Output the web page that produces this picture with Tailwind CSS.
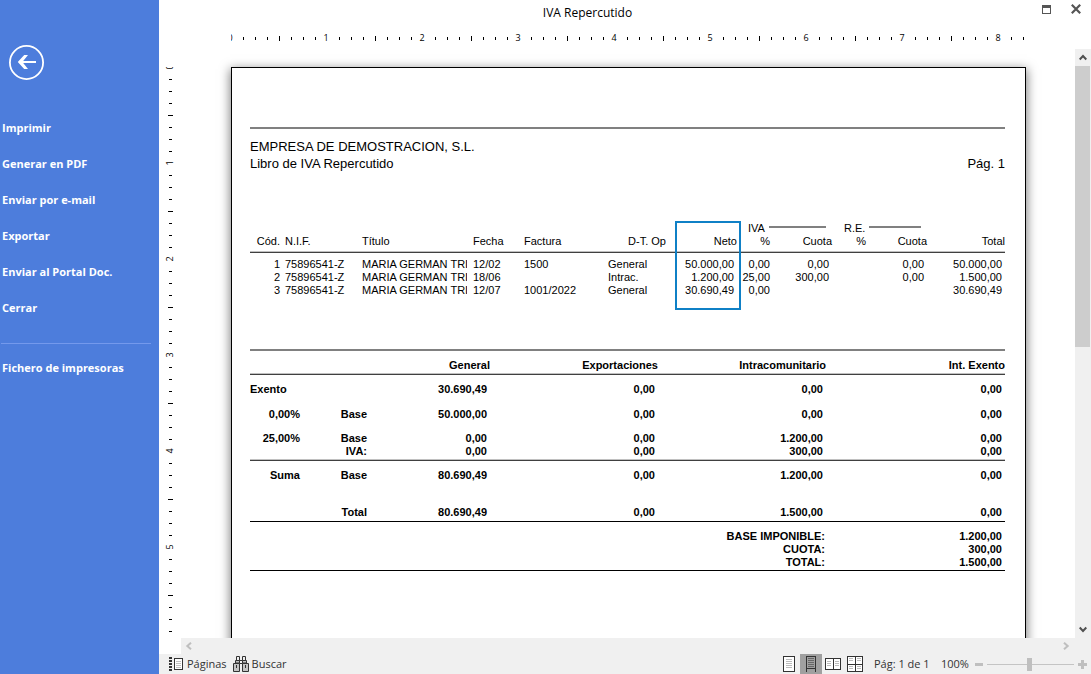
<!DOCTYPE html>
<html lang="es">
<head>
<meta charset="utf-8">
<title>IVA Repercutido</title>
<script src="https://cdn.jsdelivr.net/npm/@tailwindcss/browser@4"></script>
</head>
<body class="flex h-screen overflow-hidden bg-white font-['Open_Sans','Noto_Sans',sans-serif] text-xs text-black">

<aside class="flex w-[159px] shrink-0 flex-col bg-[#4d7ddc] text-white">
  <button type="button" aria-label="Volver" class="mt-[45px] ml-[9px] size-[35px]">
    <svg viewBox="0 0 35 35" class="size-full" fill="none" stroke="#fff">
      <circle cx="17.5" cy="17.5" r="16.6" stroke-width="1.8"/>
      <path d="M11 17H27" stroke-width="2"/>
      <path d="M8.800 17L15.200 10H19L13.400 17L19 24H15.200Z" fill="#fff" stroke="none"/>
    </svg>
  </button>
  <nav class="mt-[30px] flex flex-col text-[11px] font-bold">
    <a href="#" class="flex h-9 items-center pl-0.5">Imprimir</a>
    <a href="#" class="flex h-9 items-center pl-0.5">Generar en PDF</a>
    <a href="#" class="flex h-9 items-center pl-0.5">Enviar por e-mail</a>
    <a href="#" class="flex h-9 items-center pl-0.5">Exportar</a>
    <a href="#" class="flex h-9 items-center pl-0.5">Enviar al Portal Doc.</a>
    <a href="#" class="flex h-9 items-center pl-0.5">Cerrar</a>
    <hr class="mt-[17px] mr-2 mb-1.5 ml-px border-[#7499ec]">
    <a href="#" class="flex h-9 items-center pl-0.5">Fichero de impresoras</a>
  </nav>
</aside>

<main class="flex min-w-0 flex-1 flex-col">
  <header class="flex h-7 shrink-0">
    <h1 class="flex flex-1 items-center justify-center pb-0.5">IVA Repercutido</h1>
    <div class="flex w-[75px] items-start">
      <button type="button" aria-label="Maximizar" class="ml-[26px] pt-[5px]">
        <svg width="9" height="9" class="block" shape-rendering="crispEdges"><path d="M0 0H9V9H0ZM1 3V8H8V3Z" fill="#555" fill-rule="evenodd"/></svg>
      </button>
      <button type="button" aria-label="Cerrar ventana" class="ml-5 pt-1">
        <svg width="10" height="10" class="block" fill="none" stroke="#555" stroke-width="2.2"><path d="M.8.8L9.2 9.2M9.2.8L.8 9.2"/></svg>
      </button>
    </div>
  </header>

  <svg class="h-[21px] w-full shrink-0" font-size="9" text-anchor="middle" aria-label="Regla horizontal">
    <defs>
      <pattern id="ticks-x" x="72" y="0" width="96" height="21" patternUnits="userSpaceOnUse">
        <path d="M12 9h1v3h-1zM24 9h1v3h-1zM36 9h1v3h-1zM48 8h1v5h-1zM60 9h1v3h-1zM72 9h1v3h-1zM84 9h1v3h-1z" shape-rendering="crispEdges"/>
      </pattern>
      <clipPath id="zero-x"><rect x="72" y="0" width="10" height="21"/></clipPath>
    </defs>
    <rect x="72" width="795" height="21" fill="url(#ticks-x)"/>
    <text x="71" y="13" clip-path="url(#zero-x)">0</text>
    <text x="167" y="13">1</text><text x="263" y="13">2</text><text x="359" y="13">3</text><text x="455" y="13">4</text>
    <text x="551" y="13">5</text><text x="647" y="13">6</text><text x="743" y="13">7</text><text x="839" y="13">8</text>
  </svg>

  <div class="flex min-h-0 flex-1">
    <svg class="h-full w-[22px] shrink-0" font-size="9" text-anchor="middle" aria-label="Regla vertical">
      <defs>
        <pattern id="ticks-y" x="0" y="18" width="22" height="96" patternUnits="userSpaceOnUse">
          <path d="M10 12h3v1h-3zM10 24h3v1h-3zM10 36h3v1h-3zM9 48h5v1h-5zM10 60h3v1h-3zM10 72h3v1h-3zM10 84h3v1h-3z" shape-rendering="crispEdges"/>
        </pattern>
        <clipPath id="zero-y"><rect x="0" y="18" width="22" height="10"/></clipPath>
      </defs>
      <rect y="18" width="22" height="100%" fill="url(#ticks-y)"/>
      <g clip-path="url(#zero-y)"><text transform="translate(14 18) rotate(-90)">0</text></g>
      <text transform="translate(14 114) rotate(-90)">1</text>
      <text transform="translate(14 210) rotate(-90)">2</text>
      <text transform="translate(14 306) rotate(-90)">3</text>
      <text transform="translate(14 402) rotate(-90)">4</text>
      <text transform="translate(14 498) rotate(-90)">5</text>
    </svg>

    <div class="min-w-0 flex-1 overflow-hidden">
      <article class="relative mt-[18px] ml-[50px] h-[1123px] w-[795px] border border-black bg-white pt-[59px] pr-5 pl-[18px] font-['Liberation_Sans',Arial,sans-serif] text-[11px] leading-[13px] shadow-[0_3px_10px_1px_rgba(0,0,0,0.5)]">
        <hr class="border-t-2 border-[#808080]">
        <div class="mt-[9px] text-[13px] leading-[17px]">
          <p>EMPRESA DE DEMOSTRACION, S.L.</p>
          <div class="flex justify-between">
            <p>Libro de IVA Repercutido</p>
            <p>Pág. 1</p>
          </div>
        </div>

        <table class="mt-[50px] w-full table-fixed border-separate border-spacing-0 text-right [&_th]:font-normal">
          <colgroup>
            <col class="w-[30px]"><col class="w-[82px]"><col class="w-[105px]"><col class="w-[57px]"><col class="w-[84px]"><col class="w-[58px]">
            <col class="w-[71px]"><col class="w-[36px]"><col class="w-[59px]"><col class="w-[37px]"><col class="w-[58px]"><col>
          </colgroup>
          <thead>
            <tr>
              <th colspan="7"></th>
              <th colspan="2" class="pr-1.5 pl-[11px]"><div class="flex gap-1">IVA<span class="mt-1 h-0.5 flex-1 bg-[#808080]"></span></div></th>
              <th colspan="2" class="pr-1.5 pl-3"><div class="flex gap-1">R.E.<span class="mt-1 h-0.5 flex-1 bg-[#808080]"></span></div></th>
              <th></th>
            </tr>
            <tr class="[&_th]:border-b [&_th]:border-[#404040] [&_th]:pb-1 [&_th]:shadow-[inset_0_-1px_0_#c0c0c0]">
              <th>Cód.</th><th class="pl-[5px] text-left">N.I.F.</th><th class="text-left">Título</th><th class="pl-1.5 text-left">Fecha</th><th class="text-left">Factura</th><th>D-T. Op</th>
              <th>Neto</th><th class="pr-[3px]">%</th><th>Cuota</th><th class="pr-[3px]">%</th><th>Cuota</th><th>Total</th>
            </tr>
          </thead>
          <tbody class="[&_tr:first-child_td]:pt-[5px]">
            <tr>
              <td>1</td><td class="pl-[5px] text-left">75896541-Z</td><td class="overflow-hidden text-left whitespace-nowrap">MARIA GERMAN TRI</td><td class="pl-1.5 text-left">12/02</td><td class="text-left">1500</td><td class="text-left">General</td>
              <td class="pr-[3px]">50.000,00</td><td class="pr-[3px]">0,00</td><td class="pr-[3px]">0,00</td><td></td><td class="pr-[3px]">0,00</td><td class="pr-[3px]">50.000,00</td>
            </tr>
            <tr>
              <td>2</td><td class="pl-[5px] text-left">75896541-Z</td><td class="overflow-hidden text-left whitespace-nowrap">MARIA GERMAN TRI</td><td class="pl-1.5 text-left">18/06</td><td></td><td class="text-left">Intrac.</td>
              <td class="pr-[3px]">1.200,00</td><td class="pr-[3px]">25,00</td><td class="pr-[3px]">300,00</td><td></td><td class="pr-[3px]">0,00</td><td class="pr-[3px]">1.500,00</td>
            </tr>
            <tr>
              <td>3</td><td class="pl-[5px] text-left">75896541-Z</td><td class="overflow-hidden text-left whitespace-nowrap">MARIA GERMAN TRI</td><td class="pl-1.5 text-left">12/07</td><td class="text-left">1001/2022</td><td class="text-left">General</td>
              <td class="pr-[3px]">30.690,49</td><td class="pr-[3px]">0,00</td><td></td><td></td><td></td><td class="pr-[3px]">30.690,49</td>
            </tr>
          </tbody>
        </table>

        <hr class="mt-[52px] border-t-2 border-[#808080]">
        <table class="w-full table-fixed border-separate border-spacing-0 text-right font-bold">
          <colgroup><col class="w-[50px]"><col class="w-[67px]"><col class="w-[123px]"><col class="w-[168px]"><col class="w-[168px]"><col></colgroup>
          <thead>
            <tr class="[&_th]:border-b [&_th]:border-[#404040] [&_th]:pt-2 [&_th]:pb-0.5 [&_th]:shadow-[inset_0_-1px_0_#c0c0c0]">
              <th></th><th></th><th>General</th><th>Exportaciones</th><th>Intracomunitario</th><th>Int. Exento</th>
            </tr>
          </thead>
          <tbody class="[&_td:nth-child(n+3)]:pr-[3px]">
            <tr class="[&_td]:pt-2"><td class="text-left">Exento</td><td></td><td>30.690,49</td><td>0,00</td><td>0,00</td><td>0,00</td></tr>
            <tr class="[&_td]:pt-3"><td>0,00%</td><td>Base</td><td>50.000,00</td><td>0,00</td><td>0,00</td><td>0,00</td></tr>
            <tr class="[&_td]:pt-[11px]"><td>25,00%</td><td>Base</td><td>0,00</td><td>0,00</td><td>1.200,00</td><td>0,00</td></tr>
            <tr class="[&_td]:border-b [&_td]:border-[#404040] [&_td]:pb-0.5 [&_td]:shadow-[inset_0_-1px_0_#c0c0c0]"><td></td><td>IVA:</td><td>0,00</td><td>0,00</td><td>300,00</td><td>0,00</td></tr>
            <tr class="[&_td]:pt-2"><td>Suma</td><td>Base</td><td>80.690,49</td><td>0,00</td><td>1.200,00</td><td>0,00</td></tr>
            <tr class="[&_td]:border-b [&_td]:border-black [&_td]:pt-6 [&_td]:pb-0.5"><td></td><td>Total</td><td>80.690,49</td><td>0,00</td><td>1.500,00</td><td>0,00</td></tr>
          </tbody>
          <tfoot class="[&_td]:pr-[3px] [&_th]:pr-px">
            <tr class="[&_td]:pt-2 [&_th]:pt-2"><th colspan="5">BASE IMPONIBLE:</th><td>1.200,00</td></tr>
            <tr><th colspan="5">CUOTA:</th><td>300,00</td></tr>
            <tr class="[&_td]:border-b [&_td]:pb-px [&_th]:border-b [&_th]:pb-px"><th colspan="5">TOTAL:</th><td>1.500,00</td></tr>
          </tfoot>
        </table>
        <!-- Highlight around the Neto column -->
        <div class="pointer-events-none absolute top-[153px] left-[443px] h-[89px] w-[66px] border-2 border-[#0f80c6]"></div>
      </article>
    </div>

    <div class="flex w-4 shrink-0 flex-col bg-[#f0f0f0]">
      <button type="button" aria-label="Subir" class="flex h-[17px] items-center justify-center">
        <svg width="8" height="7" fill="none" stroke="#505050" stroke-width="2"><path d="M.7 5.5L4 2L7.3 5.5"/></svg>
      </button>
      <div class="mr-px h-[281px] bg-[#cdcdcd]"></div>
      <button type="button" aria-label="Bajar" class="mt-auto flex h-[17px] items-center justify-center">
        <svg width="8" height="7" fill="none" stroke="#505050" stroke-width="2"><path d="M.7 1.5L4 5L7.3 1.5"/></svg>
      </button>
    </div>
  </div>

  <div class="ml-[22px] flex h-4 shrink-0 items-center justify-between bg-[#f0f0f0] pr-[21px] pl-1">
    <button type="button" aria-label="Izquierda"><svg width="8" height="8" class="block" fill="none" stroke="#bfbfbf" stroke-width="2"><path d="M6 .7L2.3 4L6 7.3"/></svg></button>
    <button type="button" aria-label="Derecha"><svg width="8" height="8" class="block" fill="none" stroke="#bfbfbf" stroke-width="2"><path d="M2 .7L5.700 4L2 7.300"/></svg></button>
  </div>

  <footer class="flex h-5 shrink-0 items-center bg-[#f0f0f0] text-[11px] text-[#333]">
    <button type="button" class="ml-2.5 flex items-center gap-1">
      <svg width="14" height="16" shape-rendering="crispEdges" fill="none" stroke="#333">
        <path d="M1.500 1V15" stroke-width="3" stroke-dasharray="2 1"/>
        <rect x="5.500" y="2.500" width="8" height="11" fill="#fff"/>
        <path d="M7 5.500h5M7 7.500h5M7 9.500h5M7 11.500h5" stroke="#c0c0c0"/>
      </svg>Páginas
    </button>
    <button type="button" class="ml-1.5 flex items-center gap-[3px]">
      <svg width="16" height="16" fill="#c4c4c4" stroke="#333">
        <path d="M3.500.5h3v4h-3zM9.500.5h3v4h-3z" fill="#f0f0f0"/>
        <path d="M6.500 4.500h3v3h-3z" fill="#f0f0f0"/>
        <path d="M2.500 4.500H6.500V7H2.500zM9.500 4.500H13.500V7H9.500z"/>
        <path d="M.5 7.500H6.500V15.500H.5zM9.500 7.500H15.500V15.500H9.500z"/>
        <path d="M3.500 9v3M12.500 9v3" fill="none"/>
      </svg>Buscar
    </button>

    <div class="ml-auto flex items-center">
      <button type="button" aria-label="Una página" class="flex h-5 w-[22px] items-center justify-center">
        <svg width="12" height="16" shape-rendering="crispEdges"><path d="M.5.5h11v15H.5z" fill="#fff" stroke="#333"/><path d="M3 3.500h6M3 5.500h6M3 7.500h6M3 9.500h6M3 11.500h6" stroke="#bbb"/></svg>
      </button>
      <button type="button" aria-label="Ancho de página" aria-pressed="true" class="flex h-5 w-[22px] items-center justify-center bg-[#a0a0a0]">
        <svg width="10" height="16" shape-rendering="crispEdges" fill="none" stroke="#333"><path d="M.5 16V.5h9V16M0 12.500h10"/><path d="M2 2.500h6M2 4.500h6M2 6.500h6M2 8.500h6M2 10.500h6" stroke="#666"/></svg>
      </button>
      <button type="button" aria-label="Dos páginas" class="flex h-5 w-[22px] items-center justify-center">
        <svg width="16" height="12" shape-rendering="crispEdges"><path d="M.5.5h15v11H.5zM8 0v12" fill="#fff" stroke="#333"/><path d="M2 3.500h4M2 5.500h4M2 7.500h4M10 3.500h4M10 5.500h4M10 7.500h4" stroke="#bbb"/></svg>
      </button>
      <button type="button" aria-label="Cuatro páginas" class="flex h-5 w-[22px] items-center justify-center">
        <svg width="16" height="16" shape-rendering="crispEdges"><path d="M.5.5h15v15H.5zM8 0v16M0 8h16" fill="#fff" stroke="#333"/><path d="M2 2.500h4M2 4.500h4M10 2.500h4M10 4.500h4M2 10.500h4M2 12.500h4M10 10.500h4M10 12.500h4" stroke="#bbb"/></svg>
      </button>
      <span class="ml-2 w-[67px]">Pág: 1 de 1</span>
      <label for="zoom" class="w-[34px]">100%</label>
      <button type="button" aria-label="Reducir"><svg width="8" height="3" class="block"><rect width="8" height="3" fill="#bfbfbf"/></svg></button>
      <input id="zoom" type="range" value="49" class="mx-1 h-[13px] w-[87px] appearance-none bg-[linear-gradient(#c4c4c4,#c4c4c4)] bg-[length:100%_1px] bg-center bg-no-repeat [&::-webkit-slider-thumb]:h-[13px] [&::-webkit-slider-thumb]:w-[5px] [&::-webkit-slider-thumb]:appearance-none [&::-webkit-slider-thumb]:bg-[#bfbfbf]">
      <button type="button" aria-label="Ampliar" class="mr-1"><svg width="9" height="9" class="block"><path d="M3 0h3v3h3v3H6v3H3V6H0V3h3z" fill="#bfbfbf"/></svg></button>
    </div>
  </footer>
</main>
</body>
</html>
